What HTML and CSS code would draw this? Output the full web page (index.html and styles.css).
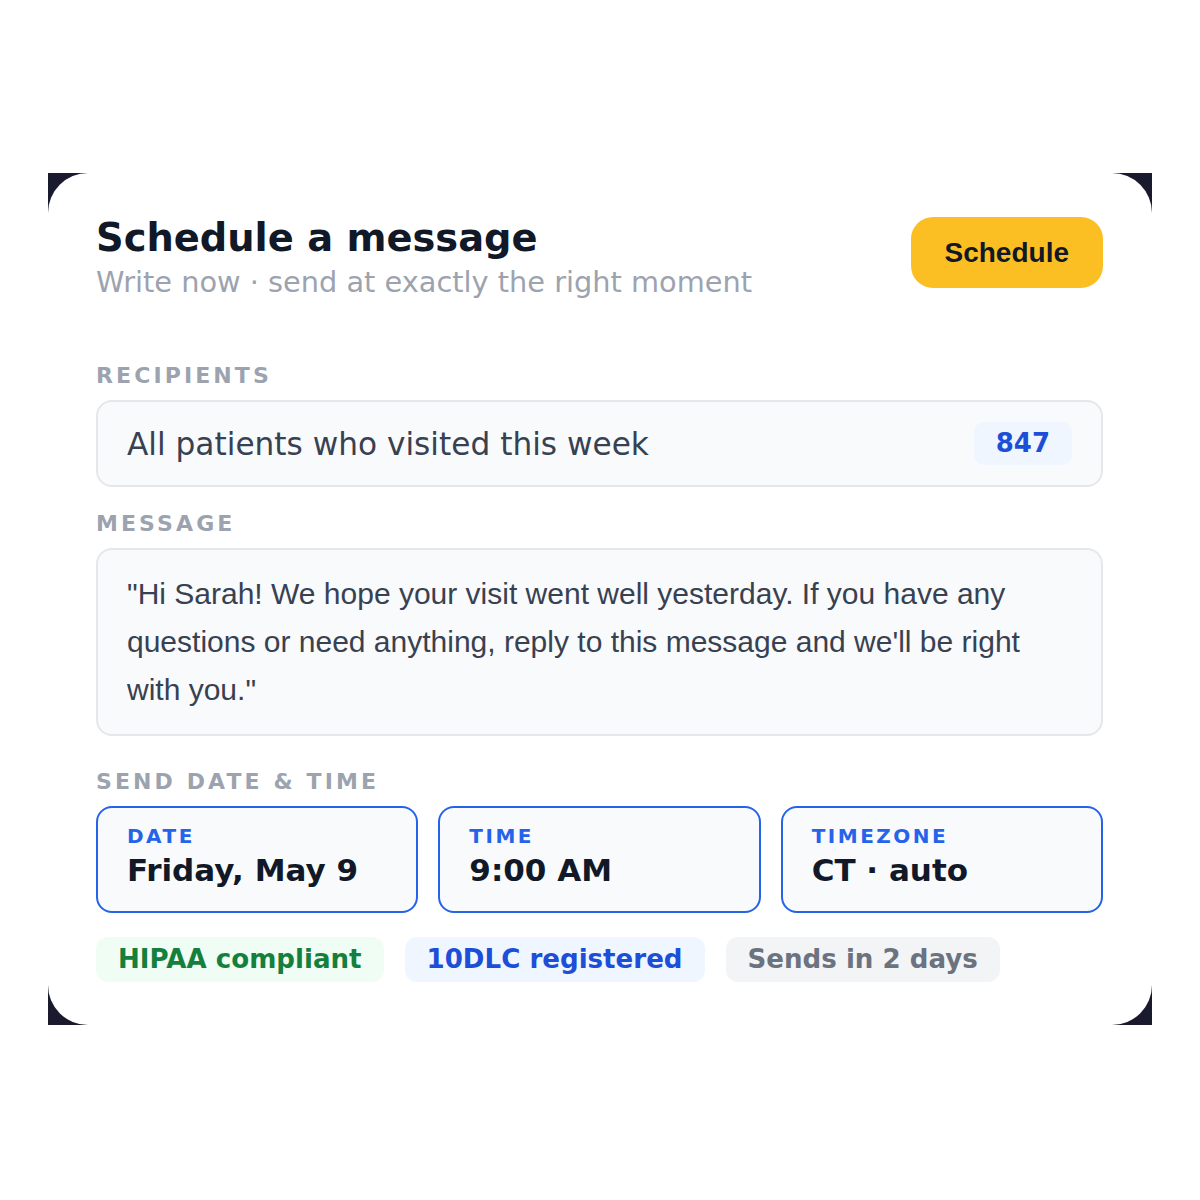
FILE: index.html
```html
<!DOCTYPE html>
<html>
<head>
<meta charset="utf-8">
<link rel="stylesheet" href="styles.css">
</head>
<body>
<div class="frame">
  <div class="card">
    <div class="header">
      <div class="heading">
        <div class="title">Schedule a message</div>
        <div class="subtitle">Write now · send at exactly the right moment</div>
      </div>
      <div class="btn">Schedule</div>
    </div>

    <div class="label label-first">RECIPIENTS</div>
    <div class="field recipients">
      <span class="recip-text">All patients who visited this week</span>
      <span class="count">847</span>
    </div>

    <div class="label label-msg">MESSAGE</div>
    <div class="field message">"Hi Sarah! We hope your visit went well yesterday. If you have any questions or need anything, reply to this message and we'll be right with you."</div>

    <div class="label label-send">SEND DATE &amp; TIME</div>
    <div class="slots">
      <div class="slot">
        <div class="slot-label">DATE</div>
        <div class="slot-value">Friday, May 9</div>
      </div>
      <div class="slot">
        <div class="slot-label">TIME</div>
        <div class="slot-value">9:00 AM</div>
      </div>
      <div class="slot">
        <div class="slot-label">TIMEZONE</div>
        <div class="slot-value">CT · auto</div>
      </div>
    </div>

    <div class="chips">
      <span class="chip chip-green">HIPAA compliant</span>
      <span class="chip chip-blue">10DLC registered</span>
      <span class="chip chip-gray">Sends in 2 days</span>
    </div>
  </div>
</div>
</body>
</html>
```

FILE: styles.css
```css
html, body {
  margin: 0;
  padding: 0;
  background: #ffffff;
}

body {
  font-family: "DejaVu Sans", sans-serif;
}

.frame {
  margin: 173px 48px 0;
  background: #1a1a2e;
}

.card {
  background: #ffffff;
  border-radius: 40px;
  padding: 43px 49px 43px 48px;
}

.header {
  display: flex;
  justify-content: space-between;
  align-items: flex-start;
}

.title {
  font-size: 38.4px;
  font-weight: bold;
  line-height: 44px;
  color: #111827;
}

.subtitle {
  margin-top: 5px;
  font-size: 28.8px;
  line-height: 34px;
  color: #9ca3af;
}

.btn {
  margin-top: 1px;
  background: #fbbf24;
  color: #111827;
  font-family: "Liberation Sans", Arial, sans-serif;
  font-weight: bold;
  font-size: 28px;
  line-height: 35px;
  padding: 18px 34px;
  border-radius: 22px;
}

.label {
  font-size: 22px;
  line-height: 26px;
  font-weight: bold;
  letter-spacing: 3.1px;
  color: #9ca3af;
  margin-bottom: 11px;
}

.label-first { margin-top: 64px; }
.label-msg { margin-top: 24px; }
.label-send { margin-top: 33px; margin-bottom: 11px; }

.field {
  background: #f9fafb;
  border: 2px solid #e5e7eb;
  border-radius: 16px;
}

.recipients {
  display: flex;
  align-items: center;
  justify-content: space-between;
  padding: 20px 29px 20px 29px;
}

.recip-text {
  font-size: 31.2px;
  color: #374151;
}

.count {
  background: #eff6ff;
  color: #1d4ed8;
  font-weight: bold;
  font-size: 26px;
  line-height: 31px;
  padding: 6px 22px;
  border-radius: 10px;
}

.message {
  font-family: "Liberation Sans", Arial, sans-serif;
  font-size: 30px;
  line-height: 48px;
  color: #374151;
  padding: 20px 30px 20px 29px;
}

.slots {
  display: grid;
  grid-template-columns: 1fr 1fr 1fr;
  gap: 20px;
}

.slot {
  background: #f9fafb;
  border: 2px solid #2563eb;
  border-radius: 16px;
  padding: 16px 29px 22px 29px;
}

.slot-label {
  font-size: 20px;
  line-height: 24px;
  font-weight: bold;
  letter-spacing: 2.5px;
  color: #2563eb;
}

.slot-value {
  margin-top: 4px;
  font-size: 31px;
  line-height: 37px;
  font-weight: bold;
  color: #111827;
}

.chips {
  display: flex;
  gap: 21px;
  margin-top: 24px;
}

.chip {
  font-size: 26.1px;
  line-height: 31px;
  font-weight: bold;
  padding: 7px 22px;
  border-radius: 12px;
}

.chip-green { background: #f0fdf4; color: #15803d; }
.chip-blue { background: #eff6ff; color: #1d4ed8; }
.chip-gray { background: #f3f4f6; color: #6b7280; }
```
